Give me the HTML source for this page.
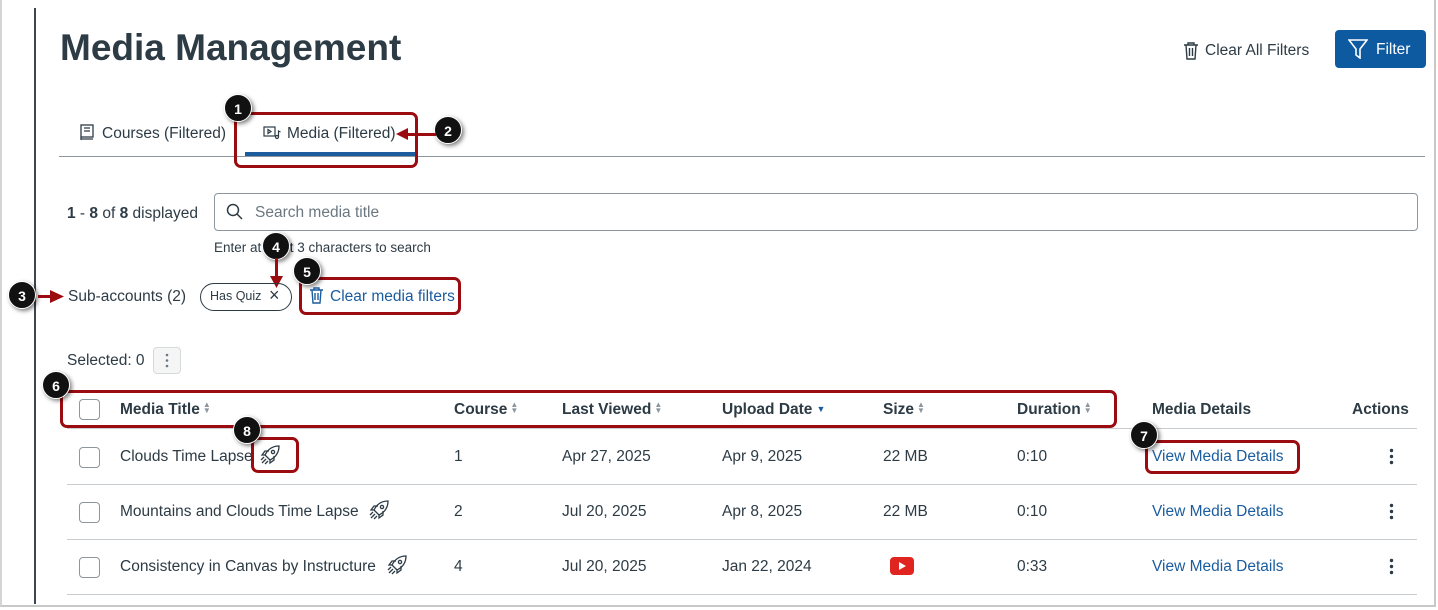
<!DOCTYPE html>
<html><head><meta charset="utf-8"><style>
*{box-sizing:border-box;margin:0;padding:0}
body{width:1438px;height:610px;background:#fff;font-family:"Liberation Sans",sans-serif;color:#2d3b45;position:relative;overflow:hidden}
.a{position:absolute;white-space:nowrap}
.frame{position:absolute;left:0;top:0;width:1436px;height:607px;border-left:2px solid #d5d5d5;border-right:2px solid #c8c8c8;border-bottom:2px solid #c8c8c8}
.lbar{position:absolute;left:34px;top:8px;width:2px;height:596px;background:#3b4650}
.t16{font-size:15.5px}
.link{color:#1a5c9e}
.red{position:absolute;border:3px solid #9b0c10;border-radius:7px}
.call{position:absolute;width:28px;height:28px;border-radius:50%;background:#111;color:#fff;font-size:14px;font-weight:bold;text-align:center;line-height:28px;box-shadow:2px 2px 4px rgba(0,0,0,.5);border:1px solid #fff}
.hr{position:absolute;left:67px;width:1350px;height:1px;background:#c7cdd1}
.cb{position:absolute;left:79px;width:21px;height:21px;border:1.5px solid #8b969e;border-radius:4px;background:#fff}
.th{font-weight:bold;font-size:15.5px}
.sort{font-size:8px;color:#8b969e;margin-left:3px;vertical-align:1px;display:inline-block;line-height:6px;width:8px}
.dots{position:absolute;font-size:18px;font-weight:bold;line-height:6px;width:6px;text-align:center}
</style></head><body>
<div class="frame"></div>
<div class="lbar"></div>
<div class="a" style="left:60px;top:27px;font-size:37px;font-weight:bold;color:#2d3b45">Media Management</div>

<svg class="a" style="left:1183px;top:42px" width="16" height="18" viewBox="0 0 16 18" fill="none" stroke="#2d3b45" stroke-width="1.4"><path d="M1 3h14M5 3V1h6v2M3 3l1 14h8l1-14M6.5 6v8M9.5 6v8"/></svg>
<div class="a t16" style="left:1205px;top:42px">Clear All Filters</div>
<div class="a" style="left:1335px;top:30px;width:91px;height:38px;background:#0e5aa0;border-radius:4px"></div>
<svg class="a" style="left:1348px;top:39px" width="20" height="20" viewBox="0 0 20 20" fill="none" stroke="#fff" stroke-width="1.6"><path d="M1 1h18l-7 9v9l-4-3v-6z"/></svg>
<div class="a t16" style="left:1376px;top:41px;color:#fff">Filter</div>

<svg class="a" style="left:80px;top:124px" width="14" height="17" viewBox="0 0 14 17" fill="none" stroke="#2d3b45" stroke-width="1.3"><rect x="1" y="1" width="12" height="12"/><path d="M4 4h6M4 7h6M1 15h12M1 13v3"/></svg>
<div class="a t16" style="left:102px;top:125px">Courses (Filtered)</div>
<svg class="a" style="left:263px;top:126px" width="18" height="14" viewBox="0 0 18 14" fill="none" stroke="#2d3b45" stroke-width="1.2"><rect x="1" y="1" width="11" height="9"/><path d="M5 3.5l3 2-3 2z"/><circle cx="14" cy="11" r="1.5"/><path d="M15.5 11V5l2 1"/></svg>
<div class="a t16" style="left:287px;top:125px">Media (Filtered)</div>
<div class="a" style="left:245px;top:152px;width:170px;height:4px;background:#1d5c9c"></div>
<div class="a" style="left:59px;top:156px;width:1366px;height:1px;background:#8b969e"></div>
<div class="red" style="left:234px;top:112px;width:184px;height:56px"></div>
<div class="call" style="left:224px;top:94px">1</div>
<div class="call" style="left:434px;top:116px">2</div>
<div class="a" style="left:400px;top:133px;width:36px;height:3px;background:#9b0c10"></div>
<svg class="a" style="left:396px;top:127px" width="12" height="14"><path d="M0 7L12 1v12z" fill="#9b0c10"/></svg>

<div class="a t16" style="left:67px;top:205px"><b>1</b> - <b>8</b> of <b>8</b> displayed</div>
<div class="a" style="left:214px;top:193px;width:1204px;height:38px;border:1px solid #8b969e;border-radius:4px"></div>
<svg class="a" style="left:226px;top:203px" width="17" height="17" viewBox="0 0 17 17" fill="none" stroke="#2d3b45" stroke-width="1.5"><circle cx="7" cy="7" r="5.5"/><path d="M11 11l5 5"/></svg>
<div class="a t16" style="left:255px;top:204px;color:#6b7780">Search media title</div>
<div class="a" style="left:214px;top:240px;font-size:13.5px">Enter at least 3 characters to search</div>
<div class="call" style="left:262px;top:232px">4</div>
<div class="a" style="left:275px;top:258px;width:3px;height:22px;background:#9b0c10"></div>
<svg class="a" style="left:270px;top:276px" width="13" height="12"><path d="M0 0h13L6.5 12z" fill="#9b0c10"/></svg>

<div class="call" style="left:8px;top:281px">3</div>
<div class="a" style="left:38px;top:295px;width:20px;height:3px;background:#9b0c10"></div>
<svg class="a" style="left:50px;top:290px" width="14" height="13"><path d="M0 0l14 6.5L0 13z" fill="#9b0c10"/></svg>
<div class="a t16" style="left:68px;top:288px">Sub-accounts (2)</div>
<div class="a" style="left:200px;top:283px;width:92px;height:28px;border:1px solid #2d3b45;border-radius:14px"></div>
<div class="a" style="left:210px;top:289px;font-size:12.5px">Has Quiz</div>
<div class="a" style="left:269px;top:285px;font-size:18px">×</div>
<div class="red" style="left:299px;top:277px;width:162px;height:38px"></div>
<div class="call" style="left:293px;top:257px">5</div>
<svg class="a" style="left:309px;top:287px" width="15" height="17" viewBox="0 0 15 17" fill="none" stroke="#1a5c9e" stroke-width="1.4"><path d="M1 3h13M5 3V1h5v2M3 3l1 13h7l1-13M6 6v7M9 6v7"/></svg>
<div class="a t16 link" style="left:330px;top:288px">Clear media filters</div>

<div class="a t16" style="left:67px;top:352px">Selected: 0</div>
<div class="a" style="left:153px;top:347px;width:28px;height:27px;border:1px solid #d5dadd;border-radius:4px;background:#f5f5f5"></div>
<svg class="a" style="left:165px;top:353px" width="4" height="15"><circle cx="2" cy="2" r="1.3" fill="#6b7780"/><circle cx="2" cy="7.5" r="1.3" fill="#6b7780"/><circle cx="2" cy="13" r="1.3" fill="#6b7780"/></svg>

<div class="red" style="left:60px;top:390px;width:1057px;height:38px"></div>
<div class="call" style="left:42px;top:371px">6</div>
<div class="cb" style="left:79px;top:399px"></div>
<div class="a th" style="left:120px;top:401px">Media Title<span class="sort">▲<br>▼</span></div>
<div class="a th" style="left:454px;top:401px">Course<span class="sort">▲<br>▼</span></div>
<div class="a th" style="left:562px;top:401px">Last Viewed<span class="sort">▲<br>▼</span></div>
<div class="a th" style="left:722px;top:401px">Upload Date<span style="font-size:9px;color:#1a5c9e;margin-left:4px;vertical-align:2px">▼</span></div>
<div class="a th" style="left:883px;top:401px">Size<span class="sort">▲<br>▼</span></div>
<div class="a th" style="left:1017px;top:401px">Duration<span class="sort">▲<br>▼</span></div>
<div class="a th" style="left:1152px;top:401px">Media Details</div>
<div class="a th" style="left:1352px;top:401px">Actions</div>
<div class="hr" style="top:428px"></div>

<div class="cb" style="top:447px"></div>
<div class="a t16" style="left:120px;top:448px">Clouds Time Lapse</div>
<div class="red" style="left:251px;top:437px;width:48px;height:36px"></div>
<div class="call" style="left:233px;top:416px">8</div>
<div class="a t16" style="left:454px;top:448px">1</div>
<div class="a t16" style="left:562px;top:448px">Apr 27, 2025</div>
<div class="a t16" style="left:722px;top:448px">Apr 9, 2025</div>
<div class="a t16" style="left:883px;top:448px">22 MB</div>
<div class="a t16" style="left:1017px;top:448px">0:10</div>
<div class="red" style="left:1145px;top:440px;width:155px;height:34px"></div>
<div class="call" style="left:1130px;top:421px">7</div>
<div class="a t16 link" style="left:1152px;top:448px">View Media Details</div>
<div class="hr" style="top:484px"></div>

<div class="cb" style="top:502px"></div>
<div class="a t16" style="left:120px;top:503px">Mountains and Clouds Time Lapse</div>
<div class="a t16" style="left:454px;top:503px">2</div>
<div class="a t16" style="left:562px;top:503px">Jul 20, 2025</div>
<div class="a t16" style="left:722px;top:503px">Apr 8, 2025</div>
<div class="a t16" style="left:883px;top:503px">22 MB</div>
<div class="a t16" style="left:1017px;top:503px">0:10</div>
<div class="a t16 link" style="left:1152px;top:503px">View Media Details</div>
<div class="hr" style="top:539px"></div>

<div class="cb" style="top:557px"></div>
<div class="a t16" style="left:120px;top:558px">Consistency in Canvas by Instructure</div>
<div class="a t16" style="left:454px;top:558px">4</div>
<div class="a t16" style="left:562px;top:558px">Jul 20, 2025</div>
<div class="a t16" style="left:722px;top:558px">Jan 22, 2024</div>
<div class="a" style="left:890px;top:557px;width:24px;height:18px;background:#e0241f;border-radius:4px"></div>
<svg class="a" style="left:898px;top:562px" width="8" height="8"><path d="M1 0l7 4-7 4z" fill="#fff"/></svg>
<div class="a t16" style="left:1017px;top:558px">0:33</div>
<div class="a t16 link" style="left:1152px;top:558px">View Media Details</div>
<div class="hr" style="top:594px"></div>

<svg width="0" height="0" style="position:absolute"><defs><g id="rk" fill="none" stroke="#2d3b45" stroke-width="1.3"><path d="M8 13l-3-3C8 4 13 1 19 1c0 6-3 11-9 14z"/><circle cx="13" cy="7" r="1.6"/><path d="M5 10l-3 0 3-4 4 0M10 15v3l4-3v-4M6 14l-4 4M4 12l-3 3M8 16l-3 3"/></g></defs></svg>
<svg class="a" style="left:260px;top:445px" width="21" height="21" viewBox="0 0 21 21"><use href="#rk"/></svg>
<svg class="a" style="left:369px;top:500px" width="21" height="21" viewBox="0 0 21 21"><use href="#rk"/></svg>
<svg class="a" style="left:387px;top:555px" width="21" height="21" viewBox="0 0 21 21"><use href="#rk"/></svg>

<svg class="a" style="left:1389px;top:448px" width="5" height="17"><circle cx="2.5" cy="2.5" r="1.7" fill="#2d3b45"/><circle cx="2.5" cy="8.5" r="1.7" fill="#2d3b45"/><circle cx="2.5" cy="14.5" r="1.7" fill="#2d3b45"/></svg>
<svg class="a" style="left:1389px;top:503px" width="5" height="17"><circle cx="2.5" cy="2.5" r="1.7" fill="#2d3b45"/><circle cx="2.5" cy="8.5" r="1.7" fill="#2d3b45"/><circle cx="2.5" cy="14.5" r="1.7" fill="#2d3b45"/></svg>
<svg class="a" style="left:1389px;top:558px" width="5" height="17"><circle cx="2.5" cy="2.5" r="1.7" fill="#2d3b45"/><circle cx="2.5" cy="8.5" r="1.7" fill="#2d3b45"/><circle cx="2.5" cy="14.5" r="1.7" fill="#2d3b45"/></svg>
</body></html>
